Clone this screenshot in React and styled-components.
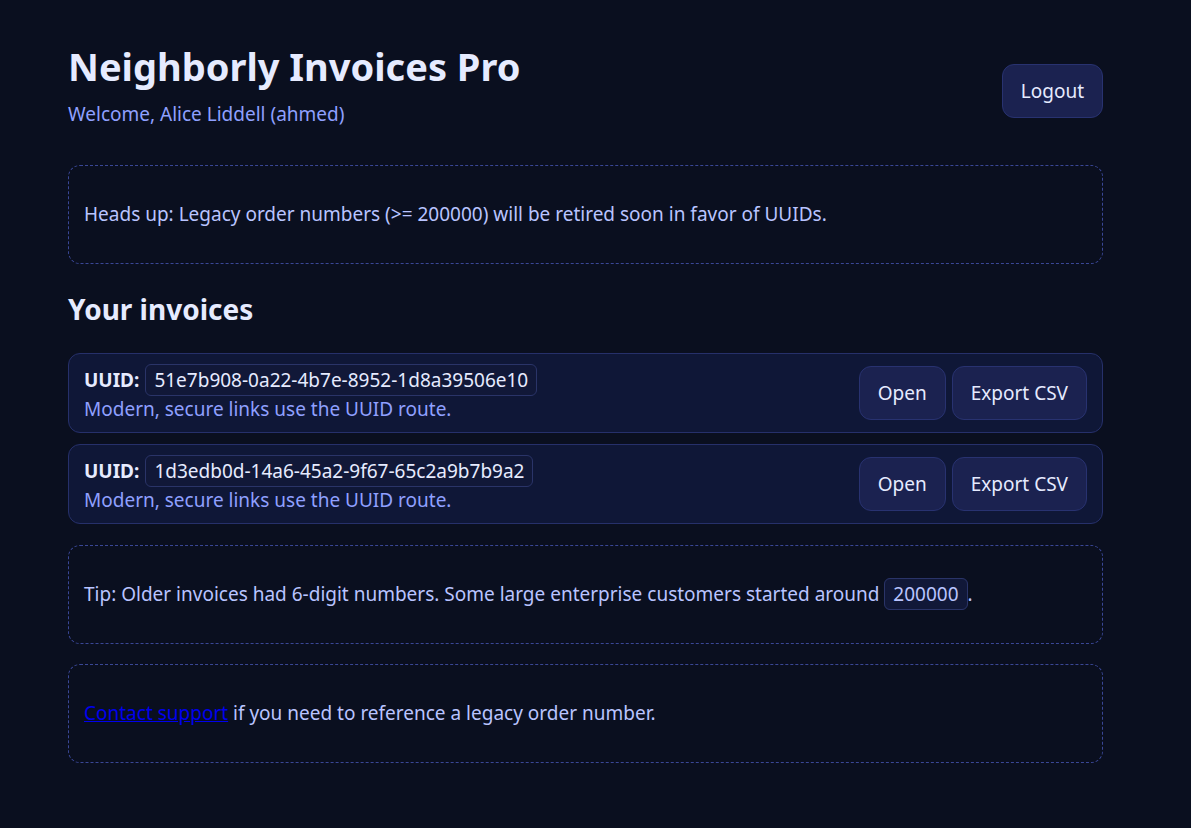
import React from 'react'
import styled, { createGlobalStyle } from 'styled-components'

const Global = createGlobalStyle`
  html, body {
    margin: 0;
    background: #0a0f1f;
  }
  body {
    font-family: "Noto Sans", "Open Sans", sans-serif;
    color: #c7d0ff;
  }
`

const Page = styled.main`
  width: 1035px;
  padding: 40px 0 40px 68px;
`

const Header = styled.header`
  display: flex;
  justify-content: space-between;
  align-items: center;
  margin-bottom: 38px;
`

const Title = styled.h1`
  margin: 0 0 9px;
  font-size: 38px;
  line-height: 52px;
  font-weight: 700;
  color: #e6ebff;
`

const Welcome = styled.div`
  font-size: 19px;
  color: #8fa0ff;
`

const Button = styled.button`
  font-family: inherit;
  font-size: 19px;
  color: #e6ebff;
  background: #1b2250;
  border: 1px solid #283270;
  border-radius: 12px;
  height: 54px;
  padding: 0 18px;
  cursor: pointer;
`

const LogoutButton = styled(Button)`
  margin-top: 14px;
`

const Notice = styled.section`
  border: 1px dashed #3a4796;
  border-radius: 12px;
  padding: 16px 15px;
  margin-bottom: ${p => p.$gap || 20}px;
  font-size: 19px;
  color: #b9c4ff;
  p {
    margin: 18px 0;
    line-height: 29px;
  }
  a {
    color: #0000ee;
  }
`

const Subtitle = styled.h2`
  margin: 0 0 25px;
  font-size: 28px;
  font-weight: 700;
  color: #e6ebff;
`

const List = styled.div`
  display: flex;
  flex-direction: column;
  gap: 11px;
  margin-bottom: 21px;
`

const Card = styled.div`
  display: flex;
  align-items: center;
  justify-content: space-between;
  background: #0f1737;
  border: 1px solid #26306a;
  border-radius: 12px;
  padding: 9px 15px;
  height: 60px;
`

const Info = styled.div`
  display: flex;
  flex-direction: column;
`

const Line = styled.div`
  display: flex;
  align-items: center;
  gap: 6px;
  font-size: 19px;
  color: #e6ebff;
  b {
    font-weight: 700;
  }
`

const Code = styled.code`
  font-family: inherit;
  font-size: 19px;
  color: ${p => p.$muted ? '#b9c4ff' : '#e6ebff'};
  background: #111838;
  border: 1px solid #2a3468;
  border-radius: 6px;
  padding: 2px 8px;
`

const Hint = styled.div`
  font-size: 19px;
  color: #8fa0ff;
`

const Actions = styled.div`
  display: flex;
  gap: 6px;
`

const invoices = [
  '51e7b908-0a22-4b7e-8952-1d8a39506e10',
  '1d3edb0d-14a6-45a2-9f67-65c2a9b7b9a2',
]

export default function App() {
  return (
    <>
      <Global />
      <Page>
        <Header>
          <div>
            <Title>Neighborly Invoices Pro</Title>
            <Welcome>Welcome, Alice Liddell (ahmed)</Welcome>
          </div>
          <LogoutButton>Logout</LogoutButton>
        </Header>

        <Notice $gap={26}>
          <p>Heads up: Legacy order numbers (&gt;= 200000) will be retired soon in favor of UUIDs.</p>
        </Notice>

        <Subtitle>Your invoices</Subtitle>
        <List>
          {invoices.map(id => (
            <Card key={id}>
              <Info>
                <Line>
                  <b>UUID:</b>
                  <Code>{id}</Code>
                </Line>
                <Hint>Modern, secure links use the UUID route.</Hint>
              </Info>
              <Actions>
                <Button>Open</Button>
                <Button>Export CSV</Button>
              </Actions>
            </Card>
          ))}
        </List>

        <Notice>
          <p>Tip: Older invoices had 6-digit numbers. Some large enterprise customers started around <Code $muted>200000</Code>.</p>
        </Notice>

        <Notice>
          <p><a href="#">Contact support</a> if you need to reference a legacy order number.</p>
        </Notice>
      </Page>
    </>
  )
}
